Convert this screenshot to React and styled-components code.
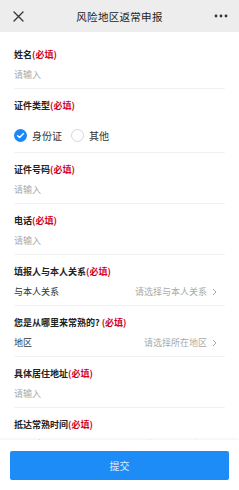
import React from "react";
import styled, { createGlobalStyle } from "styled-components";

const GlobalStyle = createGlobalStyle`
  html, body {
    margin: 0;
    padding: 0;
    background: #ffffff;
    font-family: "Noto Sans CJK SC", "Noto Sans", sans-serif;
  }
`;

const fields = [
  { label: "姓名", type: "input" },
  { label: "证件类型", type: "radio" },
  { label: "证件号码", type: "input" },
  { label: "电话", type: "input" },
  { label: "填报人与本人关系", type: "select", name: "与本人关系", hint: "请选择与本人关系" },
  { label: "您是从哪里来常熟的? ", type: "select", name: "地区", hint: "请选择所在地区" },
  { label: "具体居住地址", type: "input" },
  { label: "抵达常熟时间", type: "select", name: "抵达时间", hint: "请选择抵达时间" },
];

const App = () => {
  return (
    <Page>
      <GlobalStyle />
      <Header>
        <IconButton>
          <svg width="11" height="11" viewBox="0 0 11 11">
            <path d="M1 1L10 10M10 1L1 10" stroke="#333" strokeWidth="1.3" strokeLinecap="round" />
          </svg>
        </IconButton>
        <Title>风险地区返常申报</Title>
        <IconButton>
          <svg width="14" height="4" viewBox="0 0 14 4">
            <circle cx="2" cy="2" r="1.4" fill="#333" />
            <circle cx="7" cy="2" r="1.4" fill="#333" />
            <circle cx="12" cy="2" r="1.4" fill="#333" />
          </svg>
        </IconButton>
      </Header>
      <Content>
        {fields.map((f) => (
          <Field key={f.label}>
            <Label>
              {f.label}
              <Required>(必填)</Required>
            </Label>
            {f.type === "input" && <Placeholder>请输入</Placeholder>}
            {f.type === "radio" && (
              <RadioRow>
                <RadioItem>
                  <svg width="13" height="13" viewBox="0 0 13 13">
                    <circle cx="6.5" cy="6.5" r="6.5" fill="#1989fa" />
                    <path d="M3.6 6.7L5.6 8.6L9.5 4.6" stroke="#fff" strokeWidth="1.4" fill="none" strokeLinecap="round" strokeLinejoin="round" />
                  </svg>
                  身份证
                </RadioItem>
                <RadioItem>
                  <svg width="13" height="13" viewBox="0 0 13 13">
                    <circle cx="6.5" cy="6.5" r="6" fill="#fff" stroke="#d6d6d6" strokeWidth="1" />
                  </svg>
                  其他
                </RadioItem>
              </RadioRow>
            )}
            {f.type === "select" && (
              <SelectRow>
                <span>{f.name}</span>
                <Hint>
                  {f.hint}
                  <svg width="5" height="8" viewBox="0 0 5 8">
                    <path d="M1 1L4 4L1 7" stroke="#aaa" strokeWidth="1" fill="none" />
                  </svg>
                </Hint>
              </SelectRow>
            )}
          </Field>
        ))}
      </Content>
      <Footer>
        <SubmitButton>提交</SubmitButton>
      </Footer>
    </Page>
  );
};

const Page = styled.div`
  height: 490px;
  display: flex;
  flex-direction: column;
  overflow: hidden;
`;

const Header = styled.div`
  height: 32px;
  flex-shrink: 0;
  background: #ededed;
  display: flex;
  align-items: center;
  justify-content: space-between;
  padding: 0 8px;
`;

const IconButton = styled.div`
  width: 20px;
  height: 20px;
  display: flex;
  align-items: center;
  justify-content: center;
`;

const Title = styled.div`
  font-size: 10.5px;
  color: #222;
  letter-spacing: 0.3px;
`;

const Content = styled.div`
  flex: 1;
  overflow: hidden;
  padding: 6px 14px 0;
`;

const Field = styled.div`
  padding: 10px 0 6px;
  border-bottom: 1px solid #f2f2f2;
`;

const Label = styled.div`
  font-size: 9px;
  line-height: 14px;
  font-weight: bold;
  color: #222;
  white-space: pre;
`;

const Required = styled.span`
  color: #d0021b;
`;

const Placeholder = styled.div`
  margin-top: 6px;
  font-size: 9px;
  line-height: 14px;
  color: #aaa;
`;

const RadioRow = styled.div`
  margin-top: 12px;
  height: 20px;
  display: flex;
  align-items: center;
  gap: 9px;
  padding-bottom: 1px;
`;

const RadioItem = styled.div`
  display: flex;
  align-items: center;
  gap: 5px;
  font-size: 10px;
  color: #333;
`;

const SelectRow = styled.div`
  margin-top: 6px;
  font-size: 9px;
  line-height: 14px;
  color: #333;
  display: flex;
  justify-content: space-between;
  align-items: center;
  padding-right: 8px;
`;

const Hint = styled.span`
  color: #aaa;
  display: flex;
  align-items: center;
  gap: 5px;
`;

const Footer = styled.div`
  height: 50px;
  flex-shrink: 0;
  background: #fff;
  box-shadow: 0 -1px 3px rgba(0, 0, 0, 0.06);
  padding: 11px 10px 0;
  box-sizing: border-box;
`;

const SubmitButton = styled.div`
  height: 29px;
  background: #1e8cf7;
  border-radius: 2px;
  color: rgba(255, 255, 255, 0.85);
  font-size: 10px;
  display: flex;
  align-items: center;
  justify-content: center;
`;

export default App;
